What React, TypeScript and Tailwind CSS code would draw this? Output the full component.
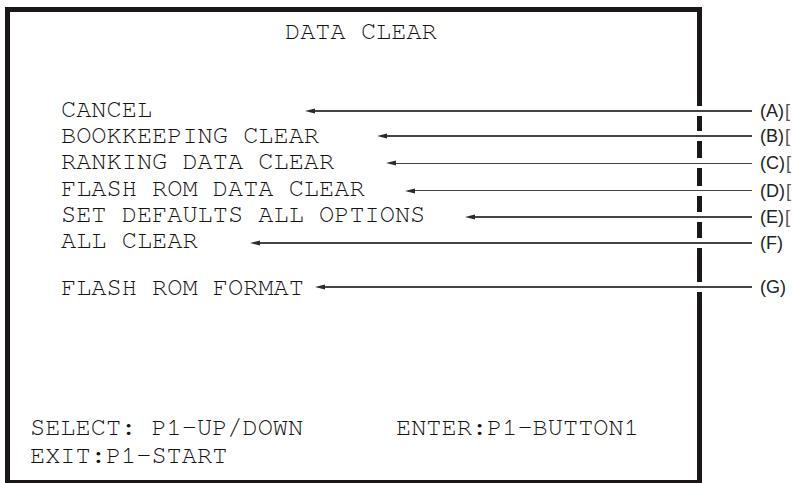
const mono = { fontFamily: '"Nimbus Mono PS", "Nimbus Mono L", FreeMono, "Liberation Mono", "Courier New", monospace' };

type Item = { text: string; tag: string; left: string; top: string; bracket: boolean };

const items: Item[] = [
  { text: "CANCEL", tag: "(A)", left: "left-[295px]", top: "top-[4px]", bracket: true },
  { text: "BOOKKEEPING CLEAR", tag: "(B)", left: "left-[367px]", top: "top-[3px]", bracket: true },
  { text: "RANKING DATA CLEAR", tag: "(C)", left: "left-[376px]", top: "top-[4px]", bracket: true },
  { text: "FLASH ROM DATA CLEAR", tag: "(D)", left: "left-[395px]", top: "top-[5px]", bracket: true },
  { text: "SET DEFAULTS ALL OPTIONS", tag: "(E)", left: "left-[455px]", top: "top-[5px]", bracket: true },
  { text: "ALL CLEAR", tag: "(F)", left: "left-[240px]", top: "top-[5px]", bracket: false },
];

function Callout({ tag, left, top, bracket }: { tag: string; left: string; top: string; bracket: boolean }) {
  return (
    <div className={`absolute ${left} ${top} right-[-95px] flex h-[20px] items-center`}>
      <div className="absolute right-[87px] top-[5px] h-[10px] w-[10px] bg-white" />
      <svg width="10" height="6" viewBox="0 0 10 6" className="relative shrink-0">
        <polygon points="0,3 10,0.5 10,5.5" fill="#2b2b2b" />
      </svg>
      <div className="relative h-[1.5px] flex-1 bg-[#444]" />
      <div
        className="w-[40px] shrink-0 whitespace-nowrap pl-[8px] text-[18px] leading-[20px] text-[#222]"
        style={{ fontFamily: '"Liberation Sans", Arial, sans-serif' }}
      >
        {tag}
        {bracket ? <span className="ml-[1px] font-light text-[#555]">[</span> : null}
      </div>
    </div>
  );
}

export default function App() {
  return (
    <div className="relative h-[483px] w-[792px] overflow-hidden bg-white text-[#151213]" style={mono}>
      <div className="ml-[5px] mt-[7px] flex h-[478px] w-[697px] flex-col border-[5px] border-[#1b1718] text-[25.3px]">
        <div className="pl-[275px] pt-[7px] leading-[26px]">DATA CLEAR</div>

        <div className="mt-[52px] flex flex-col">
          {items.map((it) => (
            <div key={it.tag} className="relative h-[26.2px] whitespace-pre pl-[51px] leading-[26px]">
              {it.text}
              <Callout tag={it.tag} left={it.left} top={it.top} bracket={it.bracket} />
            </div>
          ))}
          <div className="relative mt-[21px] h-[26px] whitespace-pre pl-[51px] leading-[26px]">
            FLASH ROM FORMAT
            <Callout tag="(G)" left="left-[305px]" top="top-[2px]" bracket={false} />
          </div>
        </div>

        <div className="mt-auto flex flex-col pb-[10px] pl-[20px] leading-[28px]">
          <div className="flex whitespace-pre">
            <span className="w-[366px]">SELECT: P1-UP/DOWN</span>
            <span>ENTER:P1-BUTTON1</span>
          </div>
          <div className="whitespace-pre">EXIT:P1-START</div>
        </div>
      </div>
    </div>
  );
}
